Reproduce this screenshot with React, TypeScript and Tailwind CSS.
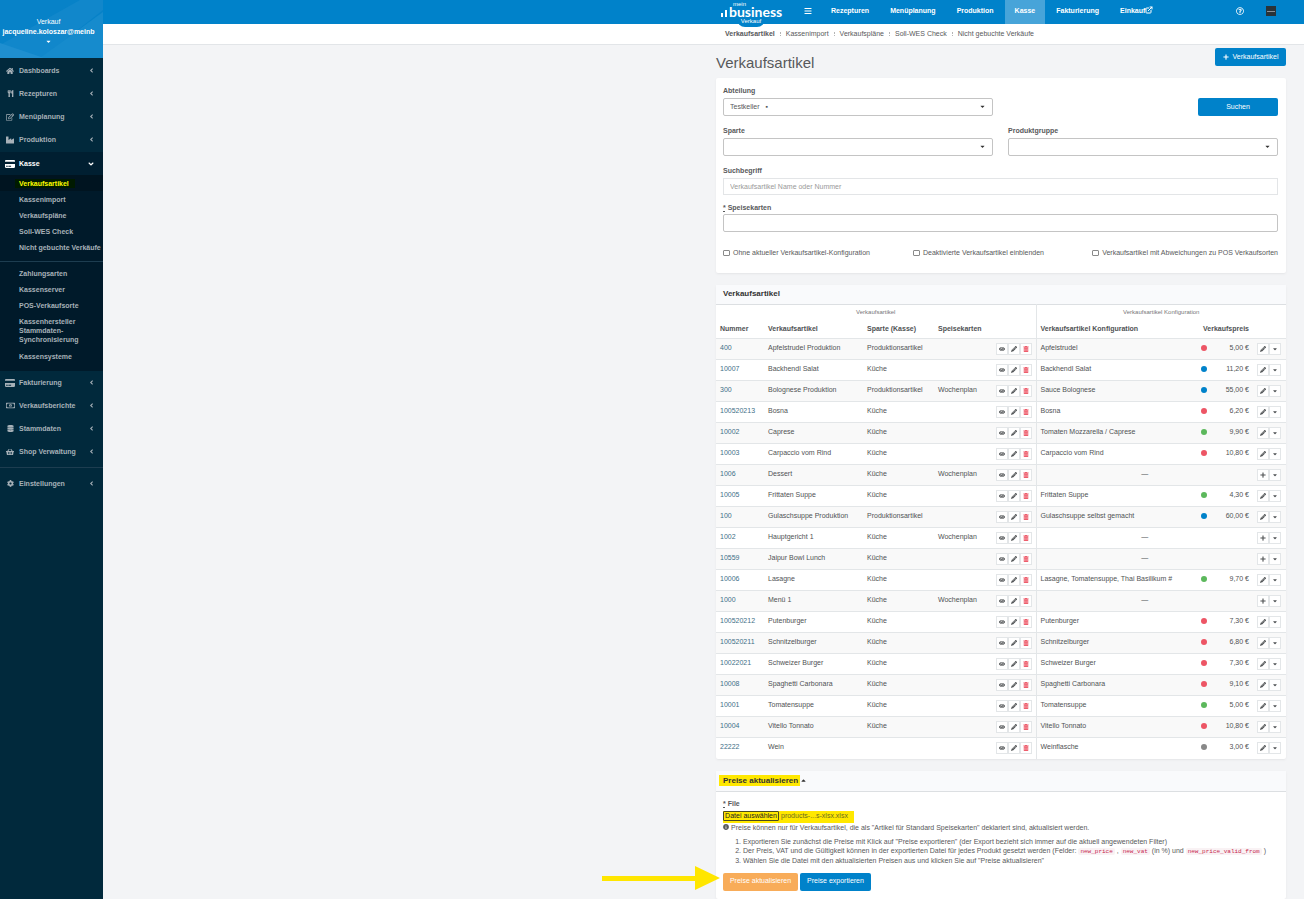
import type { ReactNode } from 'react'
import {
  FaAngleDown,
  FaAngleLeft,
  FaBars,
  FaCaretDown,
  FaCaretUp,
  FaCog,
  FaCreditCard,
  FaDatabase,
  FaEye,
  FaHome,
  FaIndustry,
  FaInfoCircle,
  FaPencilAlt,
  FaPlus,
  FaRegEdit,
  FaRegMoneyBillAlt,
  FaRegQuestionCircle,
  FaShoppingBasket,
  FaTrashAlt,
  FaUtensils,
} from 'react-icons/fa'
import { FiExternalLink } from 'react-icons/fi'

type Dot = 'red' | 'blue' | 'green' | 'gray'

interface Article {
  number: string
  name: string
  category: string
  menu?: string
  config?: string
  dot?: Dot
  price?: string
}

const articles: Article[] = [
  { number: '400', name: 'Apfelstrudel Produktion', category: 'Produktionsartikel', config: 'Apfelstrudel', dot: 'red', price: '5,00 €' },
  { number: '10007', name: 'Backhendl Salat', category: 'Küche', config: 'Backhendl Salat', dot: 'blue', price: '11,20 €' },
  { number: '300', name: 'Bolognese Produktion', category: 'Produktionsartikel', menu: 'Wochenplan', config: 'Sauce Bolognese', dot: 'blue', price: '55,00 €' },
  { number: '100520213', name: 'Bosna', category: 'Küche', config: 'Bosna', dot: 'red', price: '6,20 €' },
  { number: '10002', name: 'Caprese', category: 'Küche', config: 'Tomaten Mozzarella / Caprese', dot: 'green', price: '9,90 €' },
  { number: '10003', name: 'Carpaccio vom Rind', category: 'Küche', config: 'Carpaccio vom Rind', dot: 'red', price: '10,80 €' },
  { number: '1006', name: 'Dessert', category: 'Küche', menu: 'Wochenplan' },
  { number: '10005', name: 'Frittaten Suppe', category: 'Küche', config: 'Frittaten Suppe', dot: 'green', price: '4,30 €' },
  { number: '100', name: 'Gulaschsuppe Produktion', category: 'Produktionsartikel', config: 'Gulaschsuppe selbst gemacht', dot: 'blue', price: '60,00 €' },
  { number: '1002', name: 'Hauptgericht 1', category: 'Küche', menu: 'Wochenplan' },
  { number: '10559', name: 'Jaipur Bowl Lunch', category: 'Küche' },
  { number: '10006', name: 'Lasagne', category: 'Küche', config: 'Lasagne, Tomatensuppe, Thai Basilikum #', dot: 'green', price: '9,70 €' },
  { number: '1000', name: 'Menü 1', category: 'Küche', menu: 'Wochenplan' },
  { number: '100520212', name: 'Putenburger', category: 'Küche', config: 'Putenburger', dot: 'red', price: '7,30 €' },
  { number: '100520211', name: 'Schnitzelburger', category: 'Küche', config: 'Schnitzelburger', dot: 'red', price: '6,80 €' },
  { number: '10022021', name: 'Schweizer Burger', category: 'Küche', config: 'Schweizer Burger', dot: 'red', price: '7,30 €' },
  { number: '10008', name: 'Spaghetti Carbonara', category: 'Küche', config: 'Spaghetti Carbonara', dot: 'red', price: '9,10 €' },
  { number: '10001', name: 'Tomatensuppe', category: 'Küche', config: 'Tomatensuppe', dot: 'green', price: '5,00 €' },
  { number: '10004', name: 'Vitello Tonnato', category: 'Küche', config: 'Vitello Tonnato', dot: 'red', price: '10,80 €' },
  { number: '22222', name: 'Wein', category: '', config: 'Weinflasche', dot: 'gray', price: '3,00 €' },
]

const dotColors: Record<Dot, string> = {
  red: 'bg-[#ed5565]',
  blue: 'bg-[#0082ca]',
  green: 'bg-[#5cb85c]',
  gray: 'bg-[#888888]',
}

const kasseLinks = ['Kassenimport', 'Verkaufspläne', 'Soll-WES Check', 'Nicht gebuchte Verkäufe']
const kasseSettings = ['Zahlungsarten', 'Kassenserver', 'POS-Verkaufsorte']

function NavItem({ icon, label, open }: { icon: ReactNode; label: string; open?: boolean }) {
  return (
    <a
      href="#"
      className={`flex h-[23px] items-center pr-2 pl-[5px] ${open ? 'bg-[#001f31] text-white' : 'text-[#a7b1b8]'}`}
    >
      <span className="flex w-[10px] justify-center">{icon}</span>
      <span className="ml-1 flex-1">{label}</span>
      {open ? <FaAngleDown size={8} /> : <FaAngleLeft size={7} />}
    </a>
  )
}

function SubItem({ label }: { label: string }) {
  return (
    <a href="#" className="flex h-4 items-center pl-[19px] whitespace-nowrap">
      {label}
    </a>
  )
}

function Sidebar() {
  return (
    <aside className="w-[103px] shrink-0 overflow-hidden bg-[#01293c] font-bold text-[#a7b1b8]">
      <div className="relative h-[58px] bg-[#0782c8] pt-[17px] text-center leading-[10px] text-white">
        <svg className="absolute inset-0 h-full w-full" viewBox="0 0 103 58" preserveAspectRatio="none">
          <path d="M0 45 L80 0 H103 V10 L42 58 H0 Z" fill="#1187cb" />
          <path d="M103 12 L40 58 H103 Z" fill="#168bcd" />
          <path d="M0 43 L44 58 H0 Z" fill="#1f8fd0" />
        </svg>
        <button className="relative w-full pr-[6px]">
          <span className="block font-normal">Verkauf</span>
          <span className="block">jacqueline.koloszar@meinb</span>
          <FaCaretDown size={7} className="mx-auto mt-px" />
        </button>
      </div>
      <nav className="leading-[9px]">
        <div className="py-px">
          <NavItem icon={<FaHome size={8} />} label="Dashboards" />
          <NavItem icon={<FaUtensils size={7} />} label="Rezepturen" />
          <NavItem icon={<FaRegEdit size={8} />} label="Menüplanung" />
          <NavItem icon={<FaIndustry size={8} />} label="Produktion" />
        </div>
        <NavItem icon={<FaCreditCard size={10} />} label="Kasse" open />
        <div className="bg-[#001a2a] pb-[7px]">
          <a href="#" className="flex h-4 items-center bg-[#001420] pl-[15px] text-[#ffff00]">
            <span className="bg-[#001a00] pr-[6px] pl-1">Verkaufsartikel</span>
          </a>
          {kasseLinks.map((label) => (
            <SubItem key={label} label={label} />
          ))}
          <hr className="mt-[6px] mb-[3px] border-[#1d3d50]" />
          {kasseSettings.map((label) => (
            <SubItem key={label} label={label} />
          ))}
          <a href="#" className="block py-1 pl-[19px]">
            Kassenhersteller
            <br />
            Stammdaten-
            <br />
            Synchronisierung
          </a>
          <SubItem label="Kassensysteme" />
        </div>
        <NavItem icon={<FaCreditCard size={10} />} label="Fakturierung" />
        <NavItem icon={<FaRegMoneyBillAlt size={9} />} label="Verkaufsberichte" />
        <NavItem icon={<FaDatabase size={7} />} label="Stammdaten" />
        <NavItem icon={<FaShoppingBasket size={8} />} label="Shop Verwaltung" />
        <hr className="my-1 border-[#1d3d50]" />
        <NavItem icon={<FaCog size={7} />} label="Einstellungen" />
      </nav>
    </aside>
  )
}

function Logo() {
  return (
    <a href="#" className="relative ml-[5px] flex h-6 w-[78px] text-white">
      <span className="absolute top-[17px] left-4 h-[10px] w-7 rounded-b-lg bg-[#0082ca] text-center text-[6px] leading-[9px] font-normal">
        Verkauf
      </span>
      <svg width="8" height="24" viewBox="0 0 8 24" className="shrink-0" fill="currentColor">
        <rect x="0" y="13" width="2" height="4" />
        <rect x="4" y="10" width="2" height="7" />
      </svg>
      <span className="relative font-['Lato'] text-[14px] leading-[24px] font-bold">business</span>
      <span className="absolute top-px left-3 text-[6px] leading-[6px] font-normal">mein</span>
    </a>
  )
}

function TopBar() {
  return (
    <header className="flex h-6 items-center bg-[#0082ca] pl-[613px] font-bold text-white">
      <Logo />
      <button aria-label="Menü" className="mr-[9px] ml-[5px] pb-[2px]">
        <FaBars size={8} />
      </button>
      <nav className="flex h-full flex-1 items-stretch gap-px leading-[21px]">
        <a href="#" className="px-[10px]">Rezepturen</a>
        <a href="#" className="px-[10px]">Menüplanung</a>
        <a href="#" className="px-[10px]">Produktion</a>
        <a href="#" className="bg-[#47a4d9] px-[10px]">Kasse</a>
        <a href="#" className="px-[10px]">Fakturierung</a>
        <a href="#" className="flex px-[10px]">
          Einkauf
          <FiExternalLink size={8} strokeWidth={3} className="mt-[6px]" />
        </a>
      </nav>
      <button aria-label="Hilfe" className="mr-[22px] pb-[2px]">
        <FaRegQuestionCircle size={8} />
      </button>
      <span className="mr-7 mb-[2px] flex h-[10px] w-[10px] items-center justify-center bg-[#2a3338]">
        <span className="h-px w-2 bg-[#8a9196]" />
      </span>
    </header>
  )
}

function SubNav() {
  return (
    <nav className="flex h-[21px] items-center border-b border-[#e2e5e8] bg-white pl-[622px] whitespace-nowrap">
      <a href="#" className="font-bold">Verkaufsartikel</a>
      {kasseLinks.map((label) => (
        <a key={label} href="#" className="flex items-center">
          <span className="mx-[5px] h-1 border-l border-dotted border-[#b5b5b5]" />
          {label}
        </a>
      ))}
    </nav>
  )
}

function SelectField({ id, label, value }: { id: string; label: string; value?: string }) {
  return (
    <div>
      <label htmlFor={id} className="mb-[3px] block leading-[9px] font-bold">{label}</label>
      <div className="relative">
        <select id={id} className="h-[18px] w-full appearance-none rounded-xs border border-[#c4c4c4] bg-white px-[6px]">
          <option>{value}</option>
        </select>
        <FaCaretDown size={7} className="pointer-events-none absolute top-[5px] right-[7px] text-[#333333]" />
      </div>
    </div>
  )
}

function CheckField({ id, label }: { id: string; label: string }) {
  return (
    <div className="flex items-center whitespace-nowrap">
      <input id={id} type="checkbox" className="mr-[3px] h-[6px] w-[7px] appearance-none rounded-[1px] border border-[#8a8a8a]" />
      <label htmlFor={id}>{label}</label>
    </div>
  )
}

function SearchForm() {
  return (
    <form className="rounded-xs bg-white pt-2 pr-2 pb-[15px] pl-[7px] shadow-sm shadow-black/5">
      <div className="grid grid-cols-2 items-end gap-x-[15px] gap-y-[10px]">
        <SelectField id="abteilung" label="Abteilung" value={'Testkeller\u00a0\u00a0 ▪'} />
        <button type="button" className="h-[18px] w-20 justify-self-end rounded-xs bg-[#0082ca] text-white">
          Suchen
        </button>
        <SelectField id="sparte" label="Sparte" />
        <SelectField id="produktgruppe" label="Produktgruppe" />
      </div>
      <label htmlFor="suchbegriff" className="mt-[10px] mb-[3px] block leading-[9px] font-bold">Suchbegriff</label>
      <input
        id="suchbegriff"
        type="text"
        placeholder="Verkaufsartikel Name oder Nummer"
        className="block h-[17px] w-full border border-[#e3e5e7] px-[6px] placeholder:text-[#999999]"
      />
      <label htmlFor="speisekarten" className="mt-2 mb-[2px] block leading-[9px] font-bold">
        <abbr className="underline decoration-dotted">*</abbr> Speisekarten
      </label>
      <input id="speisekarten" type="text" className="block h-[18px] w-full rounded-xs border border-[#c4c4c4] px-[6px]" />
      <div className="mt-4 grid grid-cols-[190px_1fr_auto] leading-[10px]">
        <CheckField id="ohne" label="Ohne aktueller Verkaufsartikel-Konfiguration" />
        <CheckField id="deaktiviert" label="Deaktivierte Verkaufsartikel einblenden" />
        <CheckField id="abweichung" label="Verkaufsartikel mit Abweichungen zu POS Verkaufsorten" />
      </div>
    </form>
  )
}

const actionClass = 'flex h-3 w-3 items-center justify-center border border-[#e3e6e8] bg-white'

function ArticleRow({ article }: { article: Article }) {
  return (
    <tr className="h-[21px] border-t border-[#e3e6e8] align-top odd:bg-[#f9f9f9]">
      <td className="px-1 pt-1">
        <a href="#" className="text-[#3f6f87]">{article.number}</a>
      </td>
      <td className="px-1 pt-1">{article.name}</td>
      <td className="px-1 pt-1">{article.category}</td>
      <td className="px-1 pt-1">{article.menu}</td>
      <td className="border-r border-[#e3e6e8] pt-1">
        <div className="flex justify-end pr-1">
          <button aria-label="Anzeigen" className={actionClass}><FaEye size={6} /></button>
          <button aria-label="Bearbeiten" className={actionClass}><FaPencilAlt size={6} /></button>
          <button aria-label="Löschen" className={`${actionClass} text-[#ed5565]`}><FaTrashAlt size={6} /></button>
        </div>
      </td>
      {article.config ? (
        <>
          <td className="px-1 pt-1">{article.config}</td>
          <td className="pt-[6px]">
            <span className={`ml-px block h-[6px] w-[6px] rounded-full ${article.dot ? dotColors[article.dot] : ''}`} />
          </td>
          <td className="pt-1 pr-1 text-right">{article.price}</td>
        </>
      ) : (
        <td colSpan={3} className="pt-1 text-center">—</td>
      )}
      <td className="pt-1">
        <div className="flex justify-end pr-[5px]">
          <button aria-label="Konfiguration" className={actionClass}>
            {article.config ? <FaPencilAlt size={6} /> : <FaPlus size={6} />}
          </button>
          <button aria-label="Mehr" className={actionClass}><FaCaretDown size={6} /></button>
        </div>
      </td>
    </tr>
  )
}

function ArticleTable() {
  return (
    <section className="mt-3 rounded-xs bg-white shadow-sm shadow-black/5">
      <h2 className="h-[19px] bg-[#f9fafc] pl-[7px] text-[8px] leading-[17px] font-bold text-[#333333]">Verkaufsartikel</h2>
      <table className="w-full table-fixed border-collapse border-t border-[#dcdfe2] text-left leading-[9px] text-[#4f5254]">
        <colgroup>
          <col className="w-[48px]" />
          <col className="w-[99px]" />
          <col className="w-[71px]" />
          <col className="w-[58px]" />
          <col className="w-[44px]" />
          <col />
          <col className="w-[12px]" />
          <col className="w-[41px]" />
          <col className="w-[33px]" />
        </colgroup>
        <thead>
          <tr className="h-[15px] text-center text-[6px] text-[#777777]">
            <th colSpan={5} className="border-r border-[#e3e6e8] font-normal">Verkaufsartikel</th>
            <th colSpan={4} className="font-normal">Verkaufsartikel Konfiguration</th>
          </tr>
          <tr className="h-[19px] font-bold">
            <th className="px-1">Nummer</th>
            <th className="px-1">Verkaufsartikel</th>
            <th className="px-1">Sparte (Kasse)</th>
            <th className="px-1">Speisekarten</th>
            <th className="border-r border-[#e3e6e8]" />
            <th className="px-1">Verkaufsartikel Konfiguration</th>
            <th colSpan={2} className="pr-1 text-right">Verkaufspreis</th>
            <th />
          </tr>
        </thead>
        <tbody>
          {articles.map((article) => (
            <ArticleRow key={article.number} article={article} />
          ))}
        </tbody>
      </table>
    </section>
  )
}

function Code({ children }: { children: ReactNode }) {
  return (
    <code className="rounded-xs bg-[#f9f2f4] px-[2px] font-['Liberation_Mono',monospace] text-[6px] text-[#c7254e]">{children}</code>
  )
}

function PriceUpdate() {
  return (
    <section className="mt-3 rounded-xs bg-white pb-2 shadow-sm shadow-black/5">
      <h2 className="flex h-[21px] items-center border-b border-[#dcdfe2] bg-[#f9fafc] pb-px pl-[3px] text-[8px] font-bold text-[#333333]">
        <span className="bg-[#ffe800] pr-[2px] pl-1 leading-[11px]">Preise aktualisieren</span>
        <FaCaretUp size={7} />
      </h2>
      <div className="px-[7px] pt-[7px]">
        <label htmlFor="file" className="block leading-[9px] font-bold">
          <abbr className="underline decoration-dotted">*</abbr> File
        </label>
        <div className="mt-[3px] flex h-3 w-[131px] items-start bg-[#ffe800] leading-[10px] whitespace-nowrap">
          <input id="file" type="file" className="hidden" />
          <button className="h-[10px] w-14 rounded-[1px] border border-[#4a4a20] leading-[8px] text-[#222222]">Datei auswählen</button>
          <span className="ml-[2px] text-[#6b6b20]">products-...s-xlsx.xlsx</span>
        </div>
        <p className="flex items-center leading-[9px]">
          <FaInfoCircle size={6} className="mr-[2px]" />
          Preise können nur für Verkaufsartikel, die als "Artikel für Standard Speisekarten" deklariert sind, aktualisiert werden.
        </p>
        <ol className="mt-[5px] list-decimal pl-5 leading-[9px]">
          <li>Exportieren Sie zunächst die Preise mit Klick auf "Preise exportieren" (der Export bezieht sich immer auf die aktuell angewendeten Filter)</li>
          <li>
            Der Preis, VAT und die Gültigkeit können in der exportierten Datei für jedes Produkt gesetzt werden (Felder: <Code>new_price</Code> ,{' '}
            <Code>new_vat</Code> (in %) und <Code>new_price_valid_from</Code> )
          </li>
          <li>Wählen Sie die Datei mit den aktualisierten Preisen aus und klicken Sie auf "Preise aktualisieren"</li>
        </ol>
        <div className="relative mt-2 flex gap-[2px] text-white">
          <svg className="absolute top-[-7px] left-[-121px]" width="118" height="24" viewBox="0 0 118 24" fill="#ffe600">
            <path d="M0 10 H93 V0 L118 12 L93 24 V15 H0 Z" />
          </svg>
          <button className="h-[18px] w-[75px] rounded-xs bg-[#f8ac59] whitespace-nowrap">Preise aktualisieren</button>
          <button className="h-[18px] w-[71px] rounded-xs bg-[#0082ca] whitespace-nowrap">Preise exportieren</button>
        </div>
      </div>
    </section>
  )
}

export default function App() {
  return (
    <div className="flex min-h-screen bg-[#f3f4f6] font-['Liberation_Sans',sans-serif] text-[7px] text-[#58595b]">
      <Sidebar />
      <div className="min-w-0 flex-1">
        <TopBar />
        <SubNav />
        <main className="mr-[18px] ml-[613px]">
          <div className="flex h-[33px] items-start justify-between pt-[3px]">
            <h1 className="pt-[5px] text-[15px] leading-5">Verkaufsartikel</h1>
            <button className="flex h-[18px] w-[71px] items-center justify-center gap-1 rounded-xs bg-[#0082ca] whitespace-nowrap text-white">
              <FaPlus size={6} />
              Verkaufsartikel
            </button>
          </div>
          <SearchForm />
          <ArticleTable />
          <PriceUpdate />
        </main>
      </div>
    </div>
  )
}
